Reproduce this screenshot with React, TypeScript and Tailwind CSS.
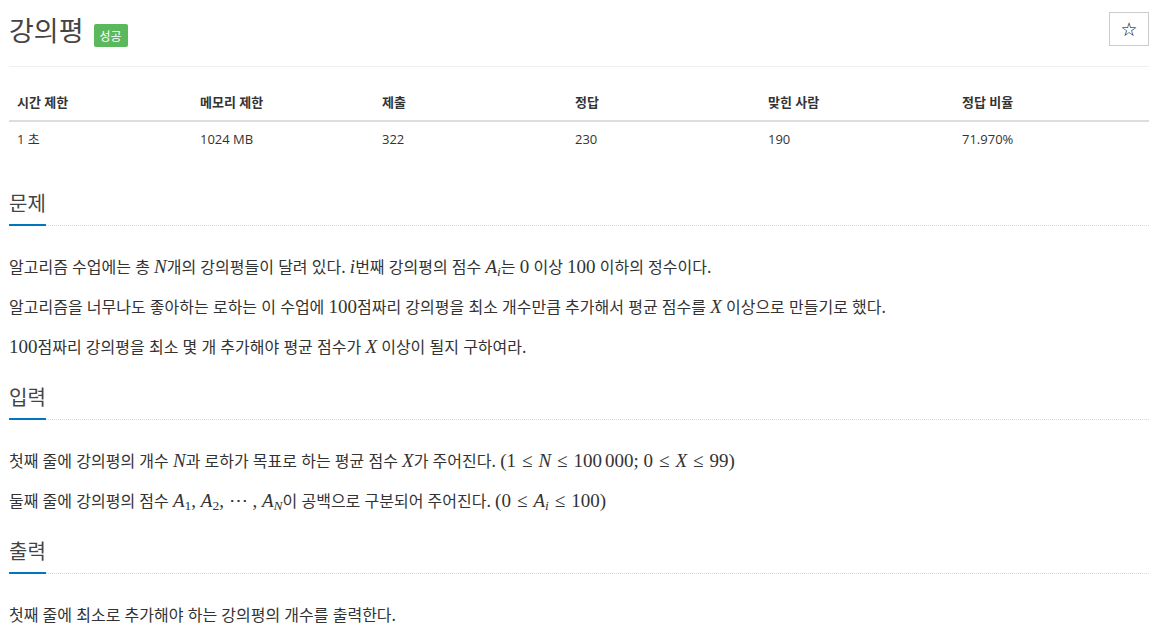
import React from "react";

const V = ({ children }: { children: React.ReactNode }) => (
  <span className="italic">{children}</span>
);

const M = ({ children }: { children: React.ReactNode }) => (
  <span className="font-['Liberation_Serif','DejaVu_Serif',serif] text-[19px] leading-none [word-spacing:0]">
    {children}
  </span>
);

const Sub = ({ children, italic = false }: { children: React.ReactNode; italic?: boolean }) => (
  <sub className={`text-[13.5px] relative top-[3px] align-baseline leading-none ${italic ? "italic" : ""}`}>
    {children}
  </sub>
);

const Le = () => <span className="px-[6px]">≤</span>;

const Heading = ({ children }: { children: React.ReactNode }) => (
  <div className="border-b border-dotted border-[#d8d8d8]">
    <h2 className="inline-block text-[20px] leading-[28px] pb-[6px] border-b-2 border-[#0076c0] -mb-px text-[#444] font-normal">
      {children}
    </h2>
  </div>
);

const P = ({ children }: { children: React.ReactNode }) => (
  <p className="text-[16px] leading-[24px] text-[#333] mb-[16px] [word-spacing:0.6px]">{children}</p>
);

export default function App() {
  const headers = ["시간 제한", "메모리 제한", "제출", "정답", "맞힌 사람", "정답 비율"];
  const values = ["1 초", "1024 MB", "322", "230", "190", "71.970%"];
  return (
    <div className="bg-white min-h-[633px] pl-[9px] pr-[3px] font-['Open_Sans','Noto_Sans_CJK_KR',sans-serif] text-[#333]">
      {/* title */}
      <div className="h-[67px] border-b border-[#eee] flex justify-between items-start pt-[12px]">
        <div className="flex items-start">
          <h1 className="text-[27px] leading-[36px] font-normal text-[#444] font-['Noto_Sans_CJK_KR',sans-serif]">
            강의평
          </h1>
          <span className="ml-[10px] mt-[12px] h-[23px] w-[34px] text-center bg-[#5cb85c] text-white text-[12px] leading-[23px] rounded-[2px] font-['Noto_Sans_CJK_KR',sans-serif]">
            성공
          </span>
        </div>
        <button className="w-[40px] h-[34px] border border-[#ccc] bg-white flex items-center justify-center text-[19px] leading-none text-black font-['DejaVu_Sans',sans-serif]">
          ☆
        </button>
      </div>

      {/* table */}
      <div className="mt-[18px] text-[13px]">
        <div className="grid grid-cols-[183px_182px_193px_193px_194px_1fr] border-b-2 border-[#ddd] h-[37px]">
          {headers.map((h) => (
            <div key={h} className="px-[8px] flex items-center font-bold">
              {h}
            </div>
          ))}
        </div>
        <div className="grid grid-cols-[183px_182px_193px_193px_194px_1fr] h-[36px]">
          {values.map((v) => (
            <div key={v} className="px-[8px] flex items-center">
              {v}
            </div>
          ))}
        </div>
      </div>

      {/* 문제 */}
      <div className="mt-[32px]">
        <Heading>문제</Heading>
        <div className="pt-[28px] font-['Noto_Sans_CJK_KR',sans-serif]">
          <P>
            알고리즘 수업에는 총 <M><V>N</V></M>개의 강의평들이 달려 있다. <M><V>i</V></M>번째 강의평의 점수{" "}
            <M><V>A</V><Sub italic>i</Sub></M>는 <M>0</M> 이상 <M>100</M> 이하의 정수이다.
          </P>
          <P>
            알고리즘을 너무나도 좋아하는 로하는 이 수업에 <M>100</M>점짜리 강의평을 최소 개수만큼 추가해서 평균 점수를{" "}
            <M><V>X</V></M> 이상으로 만들기로 했다.
          </P>
          <P>
            <M>100</M>점짜리 강의평을 최소 몇 개 추가해야 평균 점수가 <M><V>X</V></M> 이상이 될지 구하여라.
          </P>
        </div>
      </div>

      {/* 입력 */}
      <div className="mt-[26px]">
        <Heading>입력</Heading>
        <div className="pt-[28px] font-['Noto_Sans_CJK_KR',sans-serif]">
          <P>
            첫째 줄에 강의평의 개수 <M><V>N</V></M>과 로하가 목표로 하는 평균 점수 <M><V>X</V></M>가 주어진다.{" "}
            <M>
              (1<Le /><V>N</V><Le />100<span className="pl-[3px]">000;</span> 0<Le /><V>X</V><Le />99)
            </M>
          </P>
          <P>
            둘째 줄에 강의평의 점수{" "}
            <M>
              <V>A</V><Sub>1</Sub>, <V>A</V><Sub>2</Sub>, ⋯ , <V>A</V><Sub italic>N</Sub>
            </M>
            이 공백으로 구분되어 주어진다.{" "}
            <M>
              (0<Le /><V>A</V><Sub italic>i</Sub><Le />100)
            </M>
          </P>
        </div>
      </div>

      {/* 출력 */}
      <div className="mt-[26px]">
        <Heading>출력</Heading>
        <div className="pt-[28px] font-['Noto_Sans_CJK_KR',sans-serif]">
          <P>첫째 줄에 최소로 추가해야 하는 강의평의 개수를 출력한다.</P>
        </div>
      </div>
    </div>
  );
}
